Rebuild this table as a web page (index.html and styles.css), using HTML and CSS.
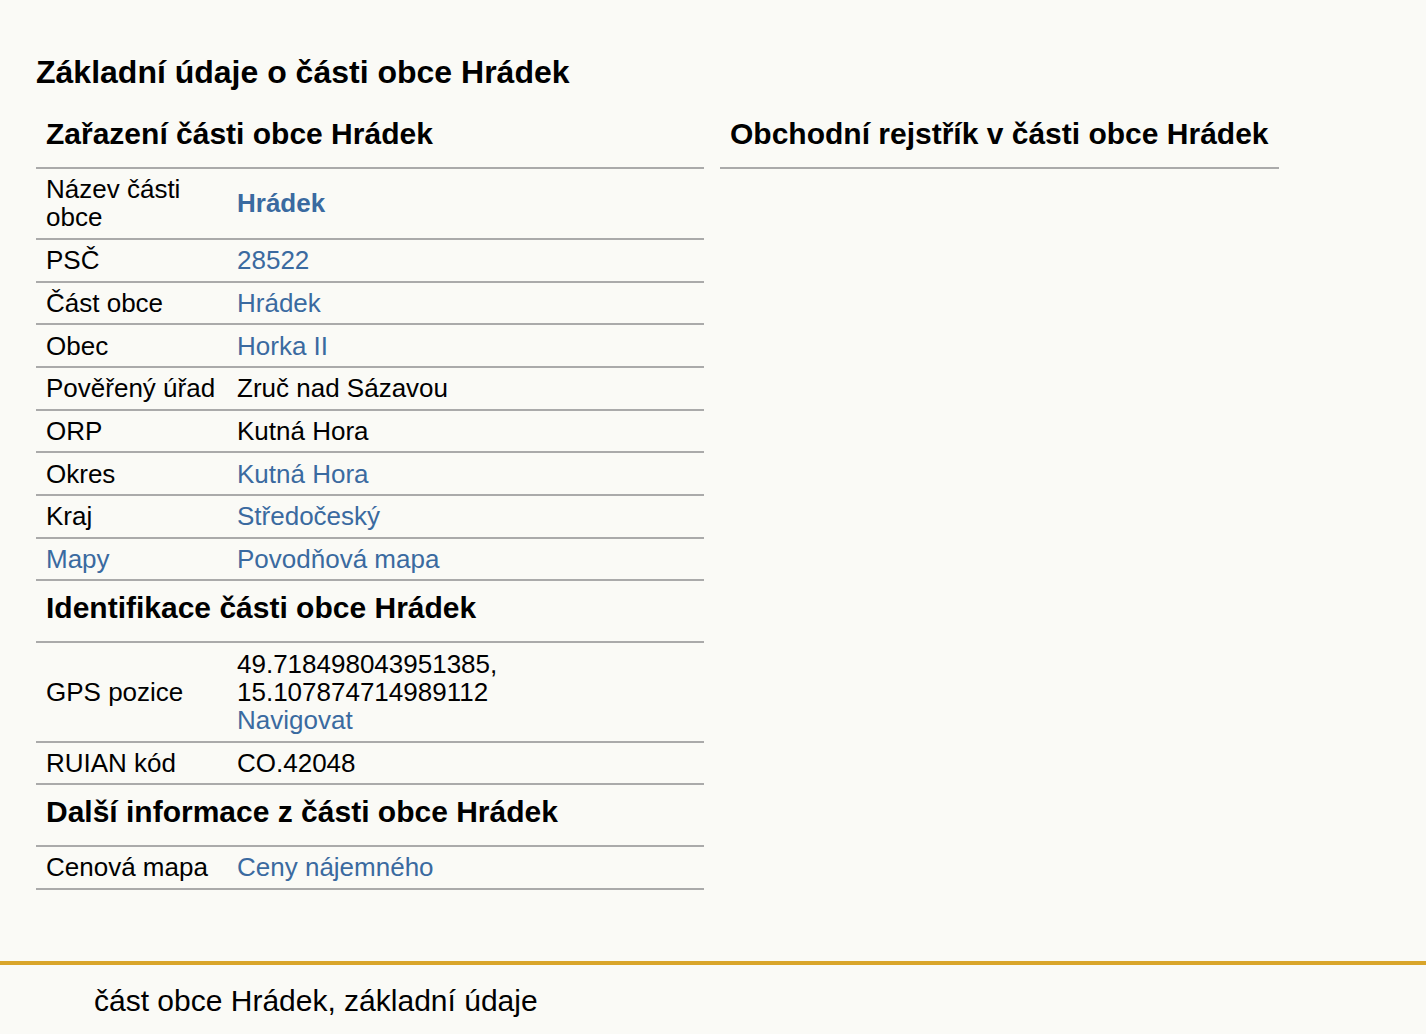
FILE: index.html
```html
<!DOCTYPE html>
<html lang="cs">
<head>
<meta charset="utf-8">
<title>Hrádek</title>
<link rel="stylesheet" href="styles.css">
</head>
<body>
<main class="page">
  <h1 class="page-title">Základní údaje o části obce Hrádek</h1>
  <div class="columns">
    <section class="col-left">
      <table class="info">
        <thead>
          <tr><th colspan="2" class="sect first">Zařazení části obce Hrádek</th></tr>
        </thead>
        <tbody>
          <tr><td class="lbl">Název části obce</td><td><a class="strong" href="#">Hrádek</a></td></tr>
          <tr><td class="lbl">PSČ</td><td><a href="#">28522</a></td></tr>
          <tr><td class="lbl">Část obce</td><td><a href="#">Hrádek</a></td></tr>
          <tr><td class="lbl">Obec</td><td><a href="#">Horka II</a></td></tr>
          <tr><td class="lbl">Pověřený úřad</td><td>Zruč nad Sázavou</td></tr>
          <tr><td class="lbl">ORP</td><td>Kutná Hora</td></tr>
          <tr><td class="lbl">Okres</td><td><a href="#">Kutná Hora</a></td></tr>
          <tr><td class="lbl">Kraj</td><td><a href="#">Středočeský</a></td></tr>
          <tr><td class="lbl"><a href="#">Mapy</a></td><td><a href="#">Povodňová mapa</a></td></tr>
          <tr><th colspan="2" class="sect">Identifikace části obce Hrádek</th></tr>
          <tr><td class="lbl">GPS pozice</td><td>49.718498043951385,<br>15.107874714989112<br><a href="#">Navigovat</a></td></tr>
          <tr><td class="lbl">RUIAN kód</td><td>CO.42048</td></tr>
          <tr><th colspan="2" class="sect">Další informace z části obce Hrádek</th></tr>
          <tr><td class="lbl">Cenová mapa</td><td><a href="#">Ceny nájemného</a></td></tr>
        </tbody>
      </table>
    </section>
    <section class="col-right">
      <table class="info">
        <thead>
          <tr><th class="sect first">Obchodní rejstřík v části obce Hrádek</th></tr>
        </thead>
      </table>
    </section>
  </div>
</main>
<footer class="footer">
  <p class="footer-text">část obce Hrádek, základní údaje</p>
</footer>
</body>
</html>
```
FILE: styles.css
```css
html, body {
  margin: 0;
  padding: 0;
  background: #fafaf6;
  color: #000;
  font-family: "Liberation Sans", Arial, sans-serif;
}

.page {
  padding: 53px 0 71px 36px;
}

.page-title {
  margin: 0;
  font-size: 32px;
  line-height: 38px;
  font-weight: bold;
}

.columns {
  display: grid;
  grid-template-columns: 668px 559px;
  column-gap: 16px;
  margin-top: 16px;
  align-items: start;
}

.info {
  width: 100%;
  border-collapse: collapse;
  font-size: 26px;
  line-height: 28.3px;
}

.info .sect {
  text-align: left;
  font-size: 30px;
  font-weight: bold;
  line-height: 30px;
  white-space: nowrap;
  padding: 12px 0 18px 10px;
  border-bottom: 2px solid #aaaaaa;
}

.info td {
  padding: 6.2px 10px;
  border-bottom: 2px solid #aaaaaa;
  vertical-align: middle;
}

.info td.lbl {
  width: 170px;
  padding-right: 11px;
}

a {
  color: #3a6aa0;
  text-decoration: none;
}

a.strong {
  font-weight: bold;
}

.footer {
  border-top: 4px solid #d9a52a;
  padding: 19px 0 30px 94px;
}

.footer-text {
  margin: 0;
  font-size: 30px;
  line-height: 34px;
}
```
